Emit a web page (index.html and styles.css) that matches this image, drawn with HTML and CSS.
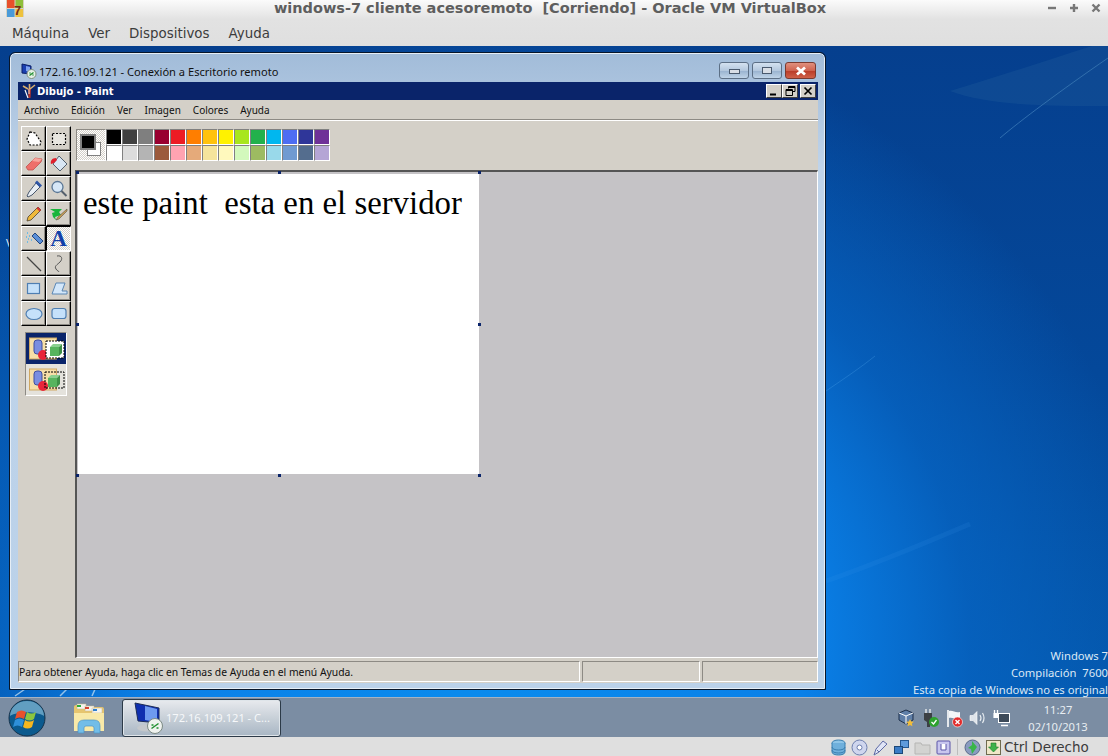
FILE: index.html
```html
<!DOCTYPE html>
<html lang="es">
<head>
<meta charset="utf-8">
<title>VirtualBox</title>
<link rel="stylesheet" href="styles.css">
</head>
<body>
<header class="vbox-head">
  <div class="vbox-title">
    <svg class="vbox-logo" width="18" height="17" viewBox="0 0 18 17"><rect width="18" height="17" fill="#d8d2c0"/><path d="M1 0h7.500v8H1z" fill="#e8502a"/><path d="M9.500 0H17v8H9.500z" fill="#8fbf3a"/><path d="M1 9h7.500v8H1z" fill="#4a9ad8"/><path d="M9.500 9H17v8H9.500z" fill="#eec23c"/><text x="8" y="15" class="logo-seven">7</text></svg>
    <span class="vbox-title-text">windows-7 cliente acesoremoto&nbsp; [Corriendo] - Oracle VM VirtualBox</span>
    <div class="vbox-controls">
      <svg width="10" height="10" viewBox="0 0 10 10"><path d="M1 5h8" stroke="#777" stroke-width="2.400"/></svg>
      <svg width="10" height="10" viewBox="0 0 10 10"><path d="M1 5h8M5 1v8" stroke="#777" stroke-width="2.400"/></svg>
      <svg width="10" height="10" viewBox="0 0 10 10"><path d="M1.500 1.500l7 7M8.500 1.500l-7 7" stroke="#777" stroke-width="2.400"/></svg>
    </div>
  </div>
  <nav class="vbox-menu"><span>Máquina</span><span>Ver</span><span>Dispositivos</span><span>Ayuda</span></nav>
</header>

<main class="desktop">
  <svg class="streaks" width="1108" height="651" viewBox="0 0 1108 651">
    <path d="M1108 12C1060 45 1020 75 1000 92" stroke="#6fb0dc" stroke-width="1" fill="none" opacity=".4"/>
    <path d="M826 345C845 332 860 322 875 310" stroke="#4fa4ea" stroke-width="1" fill="none" opacity=".3"/>
    <path d="M826 535C870 520 930 495 970 478" stroke="#3f9cf0" stroke-width="5" fill="none" opacity=".12"/>
    <path d="M950 45C1000 30 1060 10 1108 -5L1108 0L1108 60C1050 60 990 60 950 45z" fill="#3f7fa8" opacity=".16"/>
    <path d="M15 650L28 641M60 650L68 642M92 650L96 641" stroke="#cfe6f6" stroke-width="1.500" opacity=".7"/>
  </svg>
  <div class="wm-text"><div>Windows 7</div><div>Compilación&nbsp; 7600</div><div>Esta copia de Windows no es original</div></div>
  <div class="v-frag">V</div>

  <section class="rdp">
    <div class="rdp-title">
      <svg width="16" height="16" viewBox="0 0 16 16"><path d="M1 1l9 2v8L1 10z" fill="#1a3fb0" stroke="#0a1e66"/><path d="M5 3l4 1v5l-4-1z" fill="#7ea2ee"/><circle cx="10.500" cy="11" r="4.500" fill="#e6efe6" stroke="#7f8f7f"/><path d="M8.500 12.500l4-3M8.500 10h1M12.500 12h-1" stroke="#1f8f2f" stroke-width="1.300"/></svg>
      <span class="rdp-title-text">172.16.109.121 - Conexión a Escritorio remoto</span>
      <div class="rdp-btns">
        <div class="rb rb-min"><i></i></div>
        <div class="rb rb-max"><i></i></div>
        <div class="rb rb-close"><svg width="14" height="10" viewBox="0 0 14 10"><path d="M3 1.500l8 7M11 1.500l-8 7" stroke="#fff" stroke-width="2.800"/></svg></div>
      </div>
    </div>

    <div class="paint">
      <div class="p-title">
        <svg width="14" height="15" viewBox="0 0 14 15"><path d="M6 5l3 0-.5 9h-2z" fill="#b8332a"/><path d="M6.500 5l1 0v5h-1z" fill="#e8e4d8"/><path d="M1 2l5 3M13 1L8 5M7.500 0v5" stroke="#d9b070" stroke-width="1.600"/><path d="M3 6l3 8" stroke="#fff" stroke-width="1.200"/></svg>
        <span class="p-title-text">Dibujo - Paint</span>
        <div class="p-btns">
          <div class="pb"><svg width="10" height="10" viewBox="0 0 10 10"><path d="M1 8.500h6" stroke="#000" stroke-width="2"/></svg></div>
          <div class="pb"><svg width="11" height="10" viewBox="0 0 11 10"><path d="M3.500 2.500V.5h6.500v5H8M3.500 1.500H10" fill="none" stroke="#000"/><path d="M1 3.500h6.500v6H1zM1 4.500h6.500" fill="none" stroke="#000"/></svg></div>
          <div class="pb pb-x"><svg width="10" height="10" viewBox="0 0 10 10"><path d="M1.500 1.500l7 7M8.500 1.500l-7 7" stroke="#000" stroke-width="1.700"/></svg></div>
        </div>
      </div>
      <nav class="p-menu"><span>Archivo</span><span>Edición</span><span>Ver</span><span>Imagen</span><span>Colores</span><span>Ayuda</span></nav>

      <div class="p-body">
        <aside class="toolbox">
          <div class="tools">
            <div class="tool"><svg viewBox="0 0 20 20"><path d="M6 3l5 1 6 9-1 3H6L3 10z" fill="#fff" stroke="#000" stroke-dasharray="2 1.500" stroke-width="1.200"/></svg></div>
            <div class="tool"><svg viewBox="0 0 20 20"><rect x="3.500" y="4.500" width="13" height="11" fill="#e8e6e0" stroke="#000" stroke-width="1.200" stroke-dasharray="2 1.500"/></svg></div>
            <div class="tool"><svg viewBox="0 0 20 20"><path d="M2 13L11 4l7 1-1 3-8 8H4z" fill="#ee6f6a" stroke="#c0524e" stroke-width=".8"/><path d="M11 4l7 1-3 3-7-1z" fill="#f6a59c"/></svg></div>
            <div class="tool"><svg viewBox="0 0 20 20"><path d="M10 2l8 8-7 7-7-7z" fill="#d8e6f4" stroke="#52606e"/><path d="M7 4C3 4 1 7 2 10l3-1 3-3z" fill="#e01f2c"/></svg></div>
            <div class="tool"><svg viewBox="0 0 20 20"><path d="M12 4l4 4-8 8-4 2-1-1 2-4z" fill="#e9eff5" stroke="#47566b"/><path d="M13 1.500l5 5-2 2-5-5z" fill="#2f56a6"/></svg></div>
            <div class="tool"><svg viewBox="0 0 20 20"><circle cx="8.500" cy="8" r="5.500" fill="#d6e7f7" stroke="#5b7795" stroke-width="1.300"/><path d="M12.500 12l5 5" stroke="#55606c" stroke-width="2"/></svg></div>
            <div class="tool"><svg viewBox="0 0 20 20"><path d="M14 3l3 3-10 10-4 1 1-4z" fill="#f0b93a" stroke="#4b4030" stroke-width=".8"/><path d="M14 3l3 3-1.500 1.500-3-3z" fill="#d8353a"/></svg></div>
            <div class="tool"><svg viewBox="0 0 20 20"><path d="M1 5l12 0-3 3 2 3-6 2 1 3-3-3-1-4 3-1z" fill="#18b53a"/><path d="M18 5L9 13l-2 3 3-1 8-8z" fill="#c79a55" stroke="#554" stroke-width=".6"/></svg></div>
            <div class="tool"><svg viewBox="0 0 20 20"><path d="M8 7l3-3 8 8-3 3z" fill="#5b8fd8" stroke="#25487f"/><path d="M3 4h1M5 7h1M2 8h1M4 10h1M7 11h1M3 13h1" stroke="#4fb4ec" stroke-width="1.300"/></svg></div>
            <div class="tool tool-on"><span class="tool-a">A</span></div>
            <div class="tool"><svg viewBox="0 0 20 20"><path d="M3 3l14 14" stroke="#444" stroke-width="1.200"/></svg></div>
            <div class="tool"><svg viewBox="0 0 20 20"><path d="M8 2c5-1 6 3 3 6S5 12 7 15c1 2 3 2 3 3" fill="none" stroke="#555"/></svg></div>
            <div class="tool"><svg viewBox="0 0 20 20"><rect x="3.500" y="4.500" width="12" height="10" fill="#c5e1fa" stroke="#4f7fb2" stroke-width="1.200"/></svg></div>
            <div class="tool"><svg viewBox="0 0 20 20"><path d="M7 4h9l-3 8h5v3H3z" fill="#d3e7fa" stroke="#5b87b5"/></svg></div>
            <div class="tool"><svg viewBox="0 0 20 20"><ellipse cx="10" cy="10" rx="8" ry="5.500" fill="#c5e1fa" stroke="#4f7fb2" stroke-width="1.200"/></svg></div>
            <div class="tool"><svg viewBox="0 0 20 20"><rect x="3" y="4.500" width="14" height="10" rx="2.500" fill="#c5e1fa" stroke="#4f7fb2" stroke-width="1.200"/></svg></div>
          </div>
          <div class="options">
            <div class="opt opt-on"><svg width="36" height="24" viewBox="0 0 36 24"><rect x=".5" y="1" width="27" height="21" fill="#f6dfa8" stroke="#cfa762"/><rect x="5" y="3" width="8" height="14" rx="3" fill="#7a8ee0" stroke="#3f4fa0"/><circle cx="14" cy="18" r="5" fill="#e8263a"/><rect x="17" y="4" width="18" height="17" fill="#fff" stroke="#000" stroke-dasharray="2 1"/><path d="M21 10h9v9h-9z" fill="#57b45e"/><path d="M21 10l3-3h9l-3 3z" fill="#8ad08f"/><path d="M30 10l3-3v9l-3 3z" fill="#3f9047"/></svg></div>
            <div class="opt"><svg width="36" height="24" viewBox="0 0 36 24"><rect x=".5" y="1" width="27" height="21" fill="#f6dfa8" stroke="#cfa762"/><rect x="5" y="3" width="8" height="14" rx="3" fill="#7a8ee0" stroke="#3f4fa0"/><circle cx="14" cy="18" r="5" fill="#e8263a"/><path d="M19 10h9v9h-9z" fill="#57b45e"/><path d="M19 10l3-3h9l-3 3z" fill="#8ad08f"/><path d="M28 10l3-3v9l-3 3z" fill="#3f9047"/><rect x="16" y="4" width="19" height="16" fill="none" stroke="#000" stroke-dasharray="2 1"/></svg></div>
          </div>
        </aside>

        <div class="work">
          <div class="colorbar">
            <div class="curcolors"><i class="cur-bg"></i><i class="cur-fg"></i></div>
            <div class="palette">
              <i class="c1"></i><i class="c2"></i><i class="c3"></i><i class="c4"></i><i class="c5"></i><i class="c6"></i><i class="c7"></i><i class="c8"></i><i class="c9"></i><i class="c10"></i><i class="c11"></i><i class="c12"></i><i class="c13"></i><i class="c14"></i>
              <i class="c15"></i><i class="c16"></i><i class="c17"></i><i class="c18"></i><i class="c19"></i><i class="c20"></i><i class="c21"></i><i class="c22"></i><i class="c23"></i><i class="c24"></i><i class="c25"></i><i class="c26"></i><i class="c27"></i><i class="c28"></i>
            </div>
          </div>
          <div class="canvas-area">
            <div class="canvas">
              <p class="canvas-text">este paint&nbsp; esta en el servidor</p>
              <b class="h h-tl"></b><b class="h h-tm"></b><b class="h h-tr"></b><b class="h h-ml"></b><b class="h h-mr"></b><b class="h h-bl"></b><b class="h h-bm"></b><b class="h h-br"></b>
            </div>
          </div>
        </div>
      </div>

      <footer class="p-status">
        <div class="ps ps-main">Para obtener Ayuda, haga clic en Temas de Ayuda en el menú Ayuda.</div>
        <div class="ps ps-a"></div>
        <div class="ps ps-b"></div>
      </footer>
    </div>
  </section>
</main>

<div class="taskbar">
  <svg class="orb" width="38" height="38" viewBox="0 0 38 38">
    <circle cx="19" cy="19" r="18" fill="#0b5a8e" stroke="#16324a"/>
    <path d="M2 17a17 15 0 0 1 34 0c-8-5-26-5-34 0z" fill="#7fb5d2" opacity=".75"/>
    <path d="M9 13c3-2 6-2 9 0l-2 7c-3-2-6-2-9 0z" fill="#e8512c"/>
    <path d="M19 13c3 2 6 2 9 0l-2 7c-3 2-6 2-9 0z" fill="#8cc63f"/>
    <path d="M7 21c3-2 6-2 9 0l-2 7c-3-2-6-2-9 0z" fill="#2e8fd8"/>
    <path d="M17 21c3 2 6 2 9 0l-2 7c-3 2-6 2-9 0z" fill="#f5b71f"/>
  </svg>
  <svg class="folder" width="34" height="32" viewBox="0 0 34 32">
    <path d="M2 5q0-2 2-2h9l2 2h15q2 0 2 2v22H2z" fill="#e6c56f"/>
    <path d="M5 2h9v5H5zM13 4h9v5h-9zM20 6h10v5H20z" fill="#f4f4ee" stroke="#c9b58a" stroke-width=".5"/>
    <path d="M5 3h4v2H5z" fill="#2cab3f"/><path d="M13 5h4v2h-4z" fill="#d8432e"/><path d="M21 7h4v2h-4z" fill="#2d7fd0"/>
    <path d="M2 11h30v18H2z" fill="#f8e9a8"/>
    <path d="M6 31v-7q0-6 6-6h10q6 0 6 6v7h-6v-5q0-2-2-2h-6q-2 0-2 2v5z" fill="#72bde8" stroke="#4c92c4" stroke-width=".7"/>
  </svg>
  <div class="task-btn">
    <svg width="32" height="34" viewBox="0 0 32 34">
      <path d="M2 2l24 5v15L5 20z" fill="#0f2fb0" stroke="#1c2c58"/>
      <path d="M12 5l12 3v13l-12-2z" fill="#6e9aef"/>
      <ellipse cx="14" cy="27" rx="10" ry="3.500" fill="#c4c8cc"/>
      <circle cx="22" cy="25" r="7.500" fill="#eef2ee" stroke="#7c8a84"/>
      <path d="M18.500 27.500l7-5M18.500 24h2M25.500 27h-2" stroke="#1f8f2f" stroke-width="1.500"/>
    </svg>
    <span>172.16.109.121 - C...</span>
  </div>
  <div class="tray">
    <svg width="18" height="18" viewBox="0 0 18 18"><path d="M9 1l7 3v7l-7 4-7-4V4z" fill="#5f7fa8" stroke="#1d2f4a"/><path d="M2 4l7 3 7-3M9 7v8" stroke="#fff" fill="none"/><path d="M13 10l1.200 2.500 2.600.3-1.900 1.800.5 2.600-2.400-1.300-2.400 1.300.5-2.600-1.900-1.800 2.600-.3z" fill="#f2bd3a"/></svg>
    <svg width="18" height="20" viewBox="0 0 18 20"><path d="M3 5h8v7l-2 2v5H6v-5l-3-2z" fill="#3c4044"/><path d="M5 1v4M9 1v4" stroke="#dfe3e6" stroke-width="1.500"/><circle cx="13" cy="14" r="5" fill="#2da22e"/><path d="M10.500 14l2 2 3-4" stroke="#fff" stroke-width="1.300" fill="none"/></svg>
    <svg width="18" height="20" viewBox="0 0 18 20"><path d="M3 2v17" stroke="#fff" stroke-width="1.600"/><path d="M4 3c4-1 6 2 11 1v7c-5 1-7-2-11-1z" fill="#f4f6f8"/><circle cx="12.500" cy="14" r="5" fill="#e22b2b" stroke="#fff" stroke-width=".6"/><path d="M10.500 12l4 4M14.500 12l-4 4" stroke="#fff" stroke-width="1.400"/></svg>
    <svg width="18" height="18" viewBox="0 0 18 18"><path d="M1 6.500h3l4-4v13l-4-4H1z" fill="#dfe4ea" stroke="#fff" stroke-width=".6"/><path d="M11 6q2 3 0 6M13.500 4q3 5 0 10" stroke="#e6ebf0" fill="none" stroke-width="1.200"/></svg>
    <svg width="18" height="18" viewBox="0 0 18 18"><rect x="5.500" y="4.500" width="11" height="9" fill="#3d4a59" stroke="#fff"/><path d="M8 16.500h7M1.500 1v8M4.500 1v8" stroke="#fff" stroke-width="1.300"/><rect x=".5" y="4" width="5" height="5" fill="#fff"/></svg>
  </div>
  <div class="clock"><div>11:27</div><div>02/10/2013</div></div>
</div>

<footer class="vbox-status">
  <svg width="17" height="17" viewBox="0 0 17 17"><ellipse cx="8.500" cy="4" rx="6.500" ry="3" fill="#8ec5e8" stroke="#3a7fb0"/><path d="M2 4v9c0 4 13 4 13 0V4" fill="#6fb0dc" stroke="#3a7fb0"/><path d="M2 8c0 4 13 4 13 0M2 11c0 4 13 4 13 0" fill="none" stroke="#3a7fb0"/></svg>
  <svg width="17" height="17" viewBox="0 0 17 17"><circle cx="8.500" cy="8.500" r="7.500" fill="#cfd6ee" stroke="#6d7fae"/><circle cx="8.500" cy="8.500" r="2.500" fill="#fff" stroke="#6d7fae"/></svg>
  <svg width="17" height="17" viewBox="0 0 17 17"><path d="M11 2l4 3-8 8-5 3 2-6z" fill="#dfe4f5" stroke="#5d6aa5"/><path d="M5 11l2 2" stroke="#5d6aa5"/></svg>
  <svg width="17" height="17" viewBox="0 0 17 17"><rect x="7.500" y="1.500" width="8" height="7" fill="#5e9bdc" stroke="#24578f"/><rect x="1.500" y="7.500" width="8" height="7" fill="#3b7cc6" stroke="#1d4878"/></svg>
  <svg width="17" height="17" viewBox="0 0 17 17"><path d="M1 4h6l1 2h8v9H1z" fill="#d3d3d1" stroke="#b5b5b3"/></svg>
  <svg width="17" height="17" viewBox="0 0 17 17"><rect x="2" y="2" width="13" height="13" rx="1" fill="#c8c6ee" stroke="#5a55a8"/><path d="M6 5v6h5V5" fill="#fff" stroke="#5a55a8"/></svg>
  <i class="vs-sep"></i>
  <svg width="17" height="17" viewBox="0 0 17 17"><circle cx="8.500" cy="8.500" r="7.500" fill="#8a9cc0" stroke="#5a6a8a"/><path d="M8 2l5 6-5 7-1-5-3-1 4-3z" fill="#39b54a"/></svg>
  <svg width="17" height="17" viewBox="0 0 17 17"><rect x="1.500" y="1.500" width="14" height="14" fill="#efe7c8" stroke="#6f6a4e"/><path d="M6 4h5v4h2.500l-5 5-5-5H6z" fill="#3eb24a" stroke="#1e7a2a" stroke-width=".6"/></svg>
  <span class="ctrl">Ctrl Derecho</span>
</footer>
</body>
</html>
```

FILE: styles.css
```css
* { box-sizing: border-box; }
html, body { margin: 0; height: 100%; }
body {
  width: 1108px; height: 756px; overflow: hidden;
  display: flex; flex-direction: column;
  font-family: "DejaVu Sans", sans-serif;
  background: #e0e0e0;
}

/* VirtualBox chrome */
.vbox-head { height: 46px; background: linear-gradient(#fbfbfb, #e2e2e2 42%, #dfdfdf); flex: none; }
.vbox-title { height: 20px; position: relative; display: flex; align-items: center; justify-content: center; }
.vbox-logo { position: absolute; left: 6px; top: 0; }
.logo-seven { font: bold 13px "Liberation Sans", sans-serif; fill: #7a2a18; }
.vbox-title-text { font-weight: bold; font-size: 14.500px; color: #5e5e5e; white-space: pre; position: relative; left: -4px; top: -2px; }
.vbox-controls { position: absolute; right: 7px; top: 3px; display: flex; gap: 12px; }
.vbox-menu { height: 26px; display: flex; gap: 19px; padding: 5px 0 0 12px; font-size: 13.400px; color: #3c3c3c; line-height: 18px; }

/* Desktop */
.desktop {
  position: relative; flex: none; height: 651px;
  background:
    radial-gradient(ellipse 680px 640px at 480px 600px, #0a8cee 0, #0a80e8 48%, rgba(6,100,195,.75) 72%, rgba(6,80,160,0) 100%),
    linear-gradient(#053f8e, #04489a 50%, #0458ac);
}
.streaks { position: absolute; left: 0; top: 0; }
.wm-text { position: absolute; right: 0; top: 601px; width: 300px; text-align: right; color: #dce8f5; font-family: "Noto Sans", sans-serif; font-size: 11.250px; line-height: 17px; }
.v-frag { position: absolute; left: 6px; top: 189px; color: #e6eef7; font: 11px "Noto Sans", sans-serif; }

/* RDP window */
.rdp {
  position: absolute; left: 10px; top: 7px; width: 815px; height: 636px;
  background: linear-gradient(#a2bcd9, #c0d4ea 18%, #bad1e9);
  border: 1px solid #e6eef6; border-radius: 5px 5px 0 0;
  outline: 1px solid #08162a;
  padding: 0 6px 5px 7px;
  display: flex; flex-direction: column;
}
.rdp-title { height: 28px; flex: none; display: flex; gap: 2px; padding-left: 3px; }
.rdp-title > svg { margin-top: 9px; }
.rdp-title-text { font: 11.100px/16px "Noto Sans", sans-serif; color: #111; margin-top: 10px; }
.rdp-btns { margin-left: auto; display: flex; gap: 3px; margin-top: 8px; height: 17px; margin-right: 2px; }
.rb { width: 30px; height: 17px; border: 1px solid #5c6f85; border-radius: 3px; background: linear-gradient(#d4e2f0, #b4c8de 50%, #98b2cf 52%, #c0d4e8); display: flex; align-items: center; justify-content: center; }
.rb i { display: block; background: #d8dee6; border: 1px solid #4a5a6e; }
.rb-min i { width: 11px; height: 5px; margin-top: 2px; }
.rb-max i { width: 10px; height: 7px; }
.rb-close { width: 31px; background: linear-gradient(#e0907e, #cf6350 50%, #b93b28 52%, #cf6048); border-color: #7a3a30; }

/* Paint */
.paint { flex: 1; display: flex; flex-direction: column; background: #d4d0c8; font-family: "Noto Sans", sans-serif; min-height: 0; }
.p-title { height: 18px; flex: none; background: #0a246a; display: flex; align-items: center; padding-left: 4px; gap: 1px; }
.p-title-text { color: #fff; font: bold 10px "DejaVu Sans", sans-serif; }
.p-btns { margin-left: auto; display: flex; margin-right: 2px; }
.pb { width: 16px; height: 14px; background: #d4d0c8; border: 1px solid; border-color: #fff #404040 #404040 #fff; display: flex; align-items: center; justify-content: center; }
.pb-x { margin-left: 2px; }
.p-menu { height: 20px; flex: none; display: flex; gap: 12px; padding-left: 6px; font-size: 10px; line-height: 20px; color: #111; border-bottom: 1px solid #8d8a84; }
.p-body { flex: 1; display: flex; min-height: 0; border-top: 1px solid #fff; }

.toolbox { width: 57px; flex: none; padding: 5px 0 0 3px; }
.tools { display: grid; grid-template-columns: 25px 25px; grid-auto-rows: 25px; }
.tool { border: 1px solid; border-color: #fff #000 #000 #fff; background: #d4d0c8; box-shadow: inset -1px -1px 0 #8d8a84; display: flex; align-items: center; justify-content: center; }
.tool svg { width: 20px; height: 20px; }
.tool-on { border-color: #000 #fff #fff #000; background: repeating-conic-gradient(#fff 0 25%, #d4d0c8 0 50%) 0 0 / 2px 2px; box-shadow: none; }
.tool-a { font: bold 23px/1 "Liberation Serif", serif; color: #123fa8; }
.options { margin: 6px 0 0 4px; width: 42px; height: 64px; border: 1px solid; border-color: #8d8a84 #fff #fff #8d8a84; display: flex; flex-direction: column; background: #e4e2dc; }
.opt { height: 31px; display: flex; align-items: center; justify-content: center; padding-left: 1px; }
.opt-on { background: #0a246a; }

.work { flex: 1; display: flex; flex-direction: column; min-width: 0; }
.colorbar { height: 49px; flex: none; display: flex; padding: 8px 0 0 1px; }
.curcolors { width: 30px; height: 32px; position: relative; background: repeating-conic-gradient(#fff 0 25%, #d4d0c8 0 50%) 0 0 / 2px 2px; border: 1px solid; border-color: #8d8a84 #fff #fff #8d8a84; }
.curcolors i { position: absolute; display: block; width: 14px; height: 14px; border: 1px solid #808080; }
.cur-fg { left: 4px; top: 5px; background: #000; box-shadow: 0 0 0 1px #808080; z-index: 1; }
.cur-bg { left: 10px; top: 12px; background: #fff; }
.palette { display: grid; grid-template-columns: repeat(14, 16px); grid-auto-rows: 16px; }
.palette i { display: block; border: 1px solid; border-color: #808080 #fff #fff #808080; }
.c1 { background: #000; } .c2 { background: #404040; } .c3 { background: #7f7f7f; } .c4 { background: #990030; }
.c5 { background: #ed1c24; } .c6 { background: #ff7e00; } .c7 { background: #ffc20e; } .c8 { background: #fff200; }
.c9 { background: #a8e61d; } .c10 { background: #22b14c; } .c11 { background: #00b7ef; } .c12 { background: #4d6df3; }
.c13 { background: #2f3699; } .c14 { background: #6f3198; } .c15 { background: #fff; } .c16 { background: #dcdcdc; }
.c17 { background: #b4b4b4; } .c18 { background: #9c5a3c; } .c19 { background: #ffa3b1; } .c20 { background: #e5aa7a; }
.c21 { background: #f5e49c; } .c22 { background: #fff9bd; } .c23 { background: #d3f9bc; } .c24 { background: #9dbb61; }
.c25 { background: #99d9ea; } .c26 { background: #709ad1; } .c27 { background: #546d8e; } .c28 { background: #b5a5d5; }

.canvas-area { flex: 1; background: #c5c3c6; border: 1px solid; border-color: #555 #fff #fff #555; border-top-width: 2px; border-left-width: 2px; padding: 2px 0 0 1px; min-height: 0; }
.canvas { position: relative; width: 401px; height: 300px; background: #fff; }
.canvas-text { margin: 0; padding: 11px 0 0 5px; font: 32.800px/36px "Liberation Serif", serif; color: #000; white-space: pre; }
.h { position: absolute; width: 3px; height: 3px; background: #0a246a; }
.h-tl { left: -2px; top: -3px; } .h-tm { left: 200px; top: -3px; } .h-tr { left: 400px; top: -3px; }
.h-ml { left: -2px; top: 149px; } .h-mr { left: 400px; top: 149px; }
.h-bl { left: -2px; top: 300px; } .h-bm { left: 200px; top: 300px; } .h-br { left: 400px; top: 300px; }

.p-status { height: 25px; flex: none; display: flex; gap: 2px; padding: 3px 0 1px 0; font-size: 10.350px; }
.ps { border: 1px solid; border-color: #8d8a84 #fff #fff #8d8a84; height: 21px; line-height: 20px; color: #111; }
.ps-main { width: 562px; }
.ps-a { width: 118px; }
.ps-b { flex: 1; }

/* Taskbar */
.taskbar { height: 40px; flex: none; display: flex; align-items: center; background: #7b8da3; border-top: 1px solid #a5b3c3; position: relative; color: #eef2f6; font-family: "Noto Sans", sans-serif; }
.orb { margin-left: 8px; flex: none; }
.folder { margin-left: 26px; flex: none; }
.task-btn { margin-left: 16px; width: 159px; height: 38px; border: 1px solid #2c3a48; border-radius: 3px; background: linear-gradient(#e8eaee, #c8d0d8 50%, #a8b6c4); box-shadow: inset 0 0 0 1px #dfe5ea; display: flex; align-items: center; gap: 1px; padding-left: 10px; font-size: 11.100px; color: #f6f8fa; white-space: nowrap; }
.tray { margin-left: auto; display: flex; gap: 6px; align-items: center; margin-right: 3px; }
.clock { width: 88px; margin-right: 6px; text-align: center; font-size: 11.200px; line-height: 17px; color: #e8edf2; }

/* VBox status bar */
.vbox-status { flex: 1; min-height: 0; display: flex; align-items: center; gap: 4px; padding: 1px 0 0 830px; background: #dfdfdf; }
.vs-sep { width: 1px; height: 16px; background: #bcbcbc; margin: 0 2px 0 1px; }
.ctrl { font-size: 13.500px; color: #3c3c3c; margin-left: -2px; white-space: nowrap; }
```
